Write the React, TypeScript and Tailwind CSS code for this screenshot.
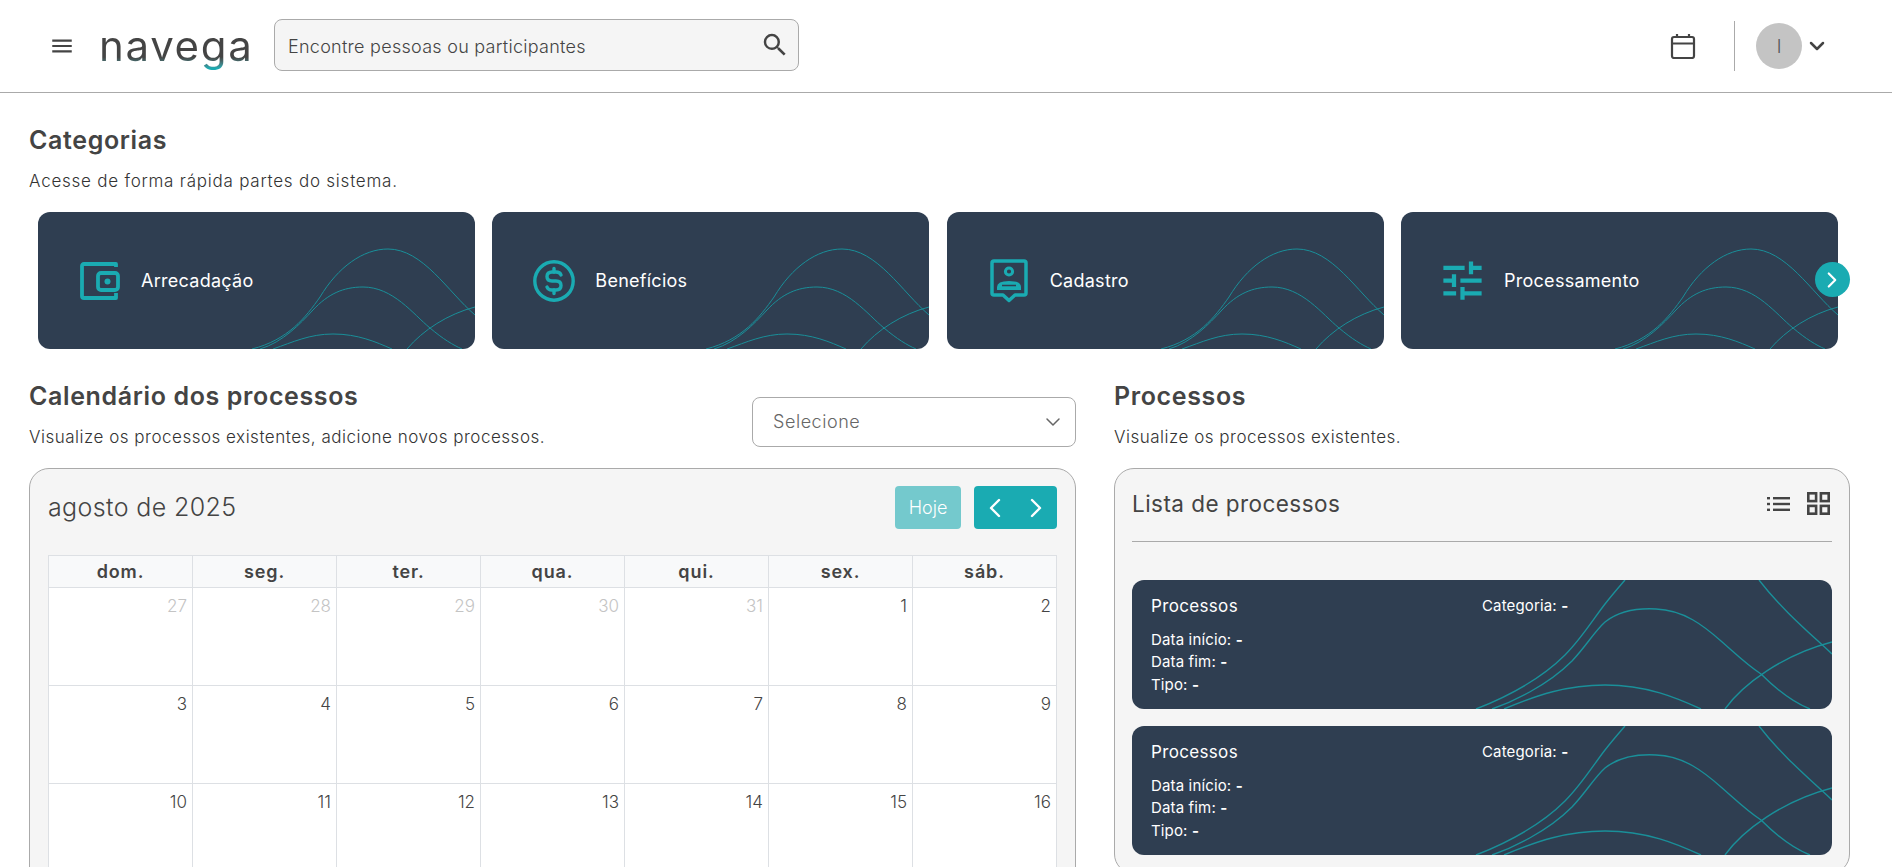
import { ChevronDown, ChevronLeft, ChevronRight } from "lucide-react";
import { MdMenu, MdSearch, MdTune } from "react-icons/md";

const weeks = [
  [27, 28, 29, 30, 31, 1, 2],
  [3, 4, 5, 6, 7, 8, 9],
  [10, 11, 12, 13, 14, 15, 16],
];
const weekdays = ["dom.", "seg.", "ter.", "qua.", "qui.", "sex.", "sáb."];

function WalletIcon() {
  return (
    <svg width="40" height="38" viewBox="0 0 40 38" fill="none" stroke="#1aabb2" strokeWidth="3.8" strokeLinejoin="round">
      <path d="M36 5 V2 H4 Q2 2 2 4 V34 Q2 36 4 36 H36 V31" />
      <rect x="18" y="11" width="20" height="17" rx="3" />
      <circle cx="27.5" cy="19.5" r="3" fill="#1aabb2" stroke="none" />
    </svg>
  );
}

function DollarIcon() {
  return (
    <svg width="42" height="42" viewBox="0 0 42 42" fill="none" stroke="#1aabb2" strokeWidth="3.4" strokeLinecap="round">
      <circle cx="21" cy="21" r="19.2" />
      <path d="M28 15 Q27 12 23 12 H19 Q14 12 14 16.5 Q14 21 19 21 H23 Q28 21 28 25.5 Q28 30 23 30 H19 Q15 30 14 27" />
      <path d="M21 8.5 V12 M21 30 V33.5" />
    </svg>
  );
}

function ContactIcon() {
  return (
    <svg width="38" height="44" viewBox="0 0 38 44" fill="none" stroke="#1aabb2" strokeWidth="3.5" strokeLinejoin="round">
      <path d="M4 2 H34 Q36 2 36 4 V34 Q36 36 34 36 H25 L19 41.5 L13 36 H4 Q2 36 2 34 V4 Q2 2 4 2 Z" />
      <circle cx="19" cy="12.5" r="3.6" strokeWidth="3" />
      <path d="M7 31 V28 Q7 22 19 22 Q31 22 31 28 V31 Z" fill="#1aabb2" stroke="none" />
      <path d="M12 26.5 H26" stroke="#2f3e51" strokeWidth="1.6" />
    </svg>
  );
}

function CalendarIcon() {
  return (
    <svg width="26" height="26" viewBox="0 0 26 26" fill="none" stroke="#444" strokeWidth="2.2">
      <rect x="2" y="4" width="22" height="21" rx="2" />
      <path d="M2 10.5 H24 M7 1 V5 M19 1 V5" />
    </svg>
  );
}

function ListIcon() {
  return (
    <svg width="23" height="14" viewBox="0 0 23 14" fill="#444">
      <rect x="0" y="0" width="3" height="2.4" />
      <rect x="0" y="5.8" width="3" height="2.4" />
      <rect x="0" y="11.6" width="3" height="2.4" />
      <rect x="6" y="0" width="17" height="2.4" />
      <rect x="6" y="5.8" width="17" height="2.4" />
      <rect x="6" y="11.6" width="17" height="2.4" />
    </svg>
  );
}

function GridIcon() {
  return (
    <svg width="23" height="23" viewBox="0 0 23 23" fill="none" stroke="#444" strokeWidth="2.6">
      <rect x="1.3" y="1.3" width="7.8" height="7.8" />
      <rect x="13.9" y="1.3" width="7.8" height="7.8" />
      <rect x="1.3" y="13.9" width="7.8" height="7.8" />
      <rect x="13.9" y="13.9" width="7.8" height="7.8" />
    </svg>
  );
}

function CategoryCard({ icon, label }: { icon: React.ReactNode; label: string }) {
  return (
    <div className="relative flex h-[137px] w-[437px] shrink-0 items-center overflow-hidden rounded-xl bg-[#2f3e51]">
      <div className="flex w-[103px] shrink-0 justify-center pl-[21px]">{icon}</div>
      <span className="text-[18px] tracking-[0.015em] text-white">{label}</span>
      <svg className="absolute inset-0" width="437" height="137" fill="none" stroke="#1a8f99" strokeWidth="1">
        <path d="M214 137 C250 128 268 105 282 85 C300 55 325 37 350 37 C385 37 410 80 437 103" />
        <path d="M222 137 C245 130 262 112 275 98 C290 82 305 75 325 75 C355 75 375 102 392 116 C405 127 415 133 424 137" />
        <path d="M235 137 C255 130 272 122 295 122 C320 122 338 130 354 137" />
        <path d="M369 137 C385 118 410 102 437 95" />
      </svg>
    </div>
  );
}

function ProcessCard() {
  return (
    <div className="relative h-[129px] overflow-hidden rounded-xl bg-[#2f3e51] text-white">
      <svg className="absolute inset-0" width="700" height="129" fill="none" stroke="#1a8f99" strokeWidth="1.4">
        <path d="M344 129 C372 118 408 100 433 75 C450 58 462 38 473 24 C480 15 487 7 493 0" />
        <path d="M627 0 C650 30 680 55 700 74" />
        <path d="M360 129 C380 122 415 106 440 81 C455 65 462 52 473 42 C487 31 505 28 524 29 C552 30 572 46 589 61 C605 75 615 85 629 94 C645 110 660 122 678 129" />
        <path d="M372 129 C405 115 435 105 473 105 C515 105 545 118 569 129" />
        <path d="M593 129 C610 105 650 75 700 62" />
      </svg>
      <div className="relative flex h-full pl-[19px] pt-[14px]">
        <div className="w-[331px]">
          <div className="text-[17px] leading-6 tracking-[0.02em]">Processos</div>
          <div className="mt-[11px] text-[15px] leading-[22.5px] tracking-[0.01em]">
            <div>Data início: <b className="font-bold">-</b></div>
            <div>Data fim: <b className="font-bold">-</b></div>
            <div>Tipo: <b className="font-bold">-</b></div>
          </div>
        </div>
        <div className="text-[15px] leading-6 tracking-[0.01em]">Categoria: <b className="font-bold">-</b></div>
      </div>
    </div>
  );
}

export default function App() {
  return (
    <div className="h-screen overflow-hidden bg-white font-['Inter',sans-serif] text-[#444]">
      <header className="flex h-[93px] items-center border-b border-[#aaa] pl-[49px] pr-[63px]">
        <MdMenu className="h-[26px] w-[26px] text-[#444]" />
        <div className="ml-[24px] w-[152px] bg-linear-to-b from-[#444] from-70% to-[#1aabb2] to-90% bg-clip-text text-[42px] leading-[56px] font-normal tracking-[0.04em] text-transparent">navega</div>
        <div className="ml-[23px] -mt-[2px] flex h-[52px] w-[525px] items-center rounded-lg border border-[#aaa] bg-[#f5f5f5] pl-[13px] pr-[8px]">
          <span className="mt-[2px] flex-1 text-[18px] font-light tracking-[0.015em]">Encontre pessoas ou participantes</span>
          <MdSearch className="h-[30px] w-[30px] text-[#444]" />
        </div>
        <div className="ml-auto"><CalendarIcon /></div>
        <div className="ml-[38px] h-[50px] w-px bg-[#aaa]" />
        <div className="ml-[21px] flex h-[46px] w-[46px] items-center justify-center rounded-full bg-[#c4c4c4] text-[18px] font-light text-[#555]">I</div>
        <ChevronDown className="ml-[3px] h-6 w-6 text-[#444]" strokeWidth={2.5} />
      </header>

      <main className="px-[29px] pt-[31px]">
        <h2 className="text-[25px] leading-8 font-semibold tracking-[0.025em]">Categorias</h2>
        <p className="mt-[13px] text-[17px] leading-6 font-light tracking-[0.045em] text-[#333]">Acesse de forma rápida partes do sistema.</p>

        <div className="relative mt-[19px] ml-[9px] flex w-fit gap-[17.33px]">
          <CategoryCard icon={<WalletIcon />} label="Arrecadação" />
          <CategoryCard icon={<DollarIcon />} label="Benefícios" />
          <CategoryCard icon={<ContactIcon />} label="Cadastro" />
          <CategoryCard icon={<MdTune size={51} color="#1aabb2" />} label="Processamento" />
          <button className="absolute right-[-12px] top-[50px] flex h-[35px] w-[35px] items-center justify-center rounded-full bg-[#1aabb2] text-white">
            <ChevronRight size={26} strokeWidth={2} />
          </button>
        </div>

        <div className="mt-[31px] flex gap-[38px]">
          <section className="w-[1047px] shrink-0">
            <div className="flex items-start justify-between">
              <div>
                <h2 className="text-[25px] leading-8 font-semibold tracking-[0.025em]">Calendário dos processos</h2>
                <p className="mt-[13px] text-[17px] leading-6 font-light tracking-[0.03em] text-[#333]">Visualize os processos existentes, adicione novos processos.</p>
              </div>
              <div className="mt-[17px] flex h-[50px] w-[324px] items-center justify-between rounded-lg border border-[#aaa] bg-white pl-[20px] pr-[10px]">
                <span className="-mt-[2px] text-[18px] font-light tracking-[0.03em] text-[#666]">Selecione</span>
                <ChevronDown className="h-6 w-6 text-[#666]" strokeWidth={1.5} />
              </div>
            </div>
            <div className="mt-[19px] rounded-[20px] border border-[#aaa] bg-[#f5f5f5] px-[18px] pt-[17px] pb-[18px]">
              <div className="flex items-center justify-between">
                <h3 className="text-[25px] font-light tracking-[0.015em]">agosto de 2025</h3>
                <div className="flex gap-[13px]">
                  <button className="h-[43px] w-[66px] rounded-sm bg-[#74c9cd] text-[18px] font-light text-white">Hoje</button>
                  <div className="flex h-[43px] w-[83px] items-center justify-between rounded-sm bg-[#1aabb2] px-[5px] text-white">
                    <ChevronLeft size={32} strokeWidth={1.8} />
                    <ChevronRight size={32} strokeWidth={1.8} />
                  </div>
                </div>
              </div>
              <div className="mt-[26px] grid grid-cols-7 border-t border-l border-[#dde0e4] bg-white">
                {weekdays.map((day) => (
                  <div key={day} className="flex h-[32px] items-center justify-center border-r border-b border-[#dde0e4] bg-[#f8f9fa] text-[18px] font-semibold tracking-[0.05em]">{day}</div>
                ))}
                {weeks.flat().map((day, i) => (
                  <div key={i} className={`h-[98px] border-r border-b border-[#dde0e4] pt-[6px] pr-[5px] text-right text-[17px] font-light ${i < 5 ? "text-[#c4c4c4]" : "text-[#444]"}`}>{day}</div>
                ))}
              </div>
            </div>
          </section>

          <section className="w-[736px] shrink-0">
            <h2 className="text-[25px] leading-8 font-semibold tracking-[0.025em]">Processos</h2>
            <p className="mt-[13px] text-[17px] leading-6 font-light tracking-[0.03em] text-[#333]">Visualize os processos existentes.</p>
            <div className="mt-[19px] rounded-[20px] border border-[#aaa] bg-[#f5f5f5] px-[17px] pt-[18px] pb-[18px]">
              <div className="flex items-center justify-between border-b border-[#aaa] pb-[20px]">
                <h3 className="text-[22.5px] font-normal tracking-[0.02em]">Lista de processos</h3>
                <div className="flex items-center gap-[17px] pr-[2px]">
                  <ListIcon />
                  <GridIcon />
                </div>
              </div>
              <div className="mt-[38px] flex flex-col gap-[17px]">
                <ProcessCard />
                <ProcessCard />
              </div>
            </div>
          </section>
        </div>
      </main>
    </div>
  );
}
